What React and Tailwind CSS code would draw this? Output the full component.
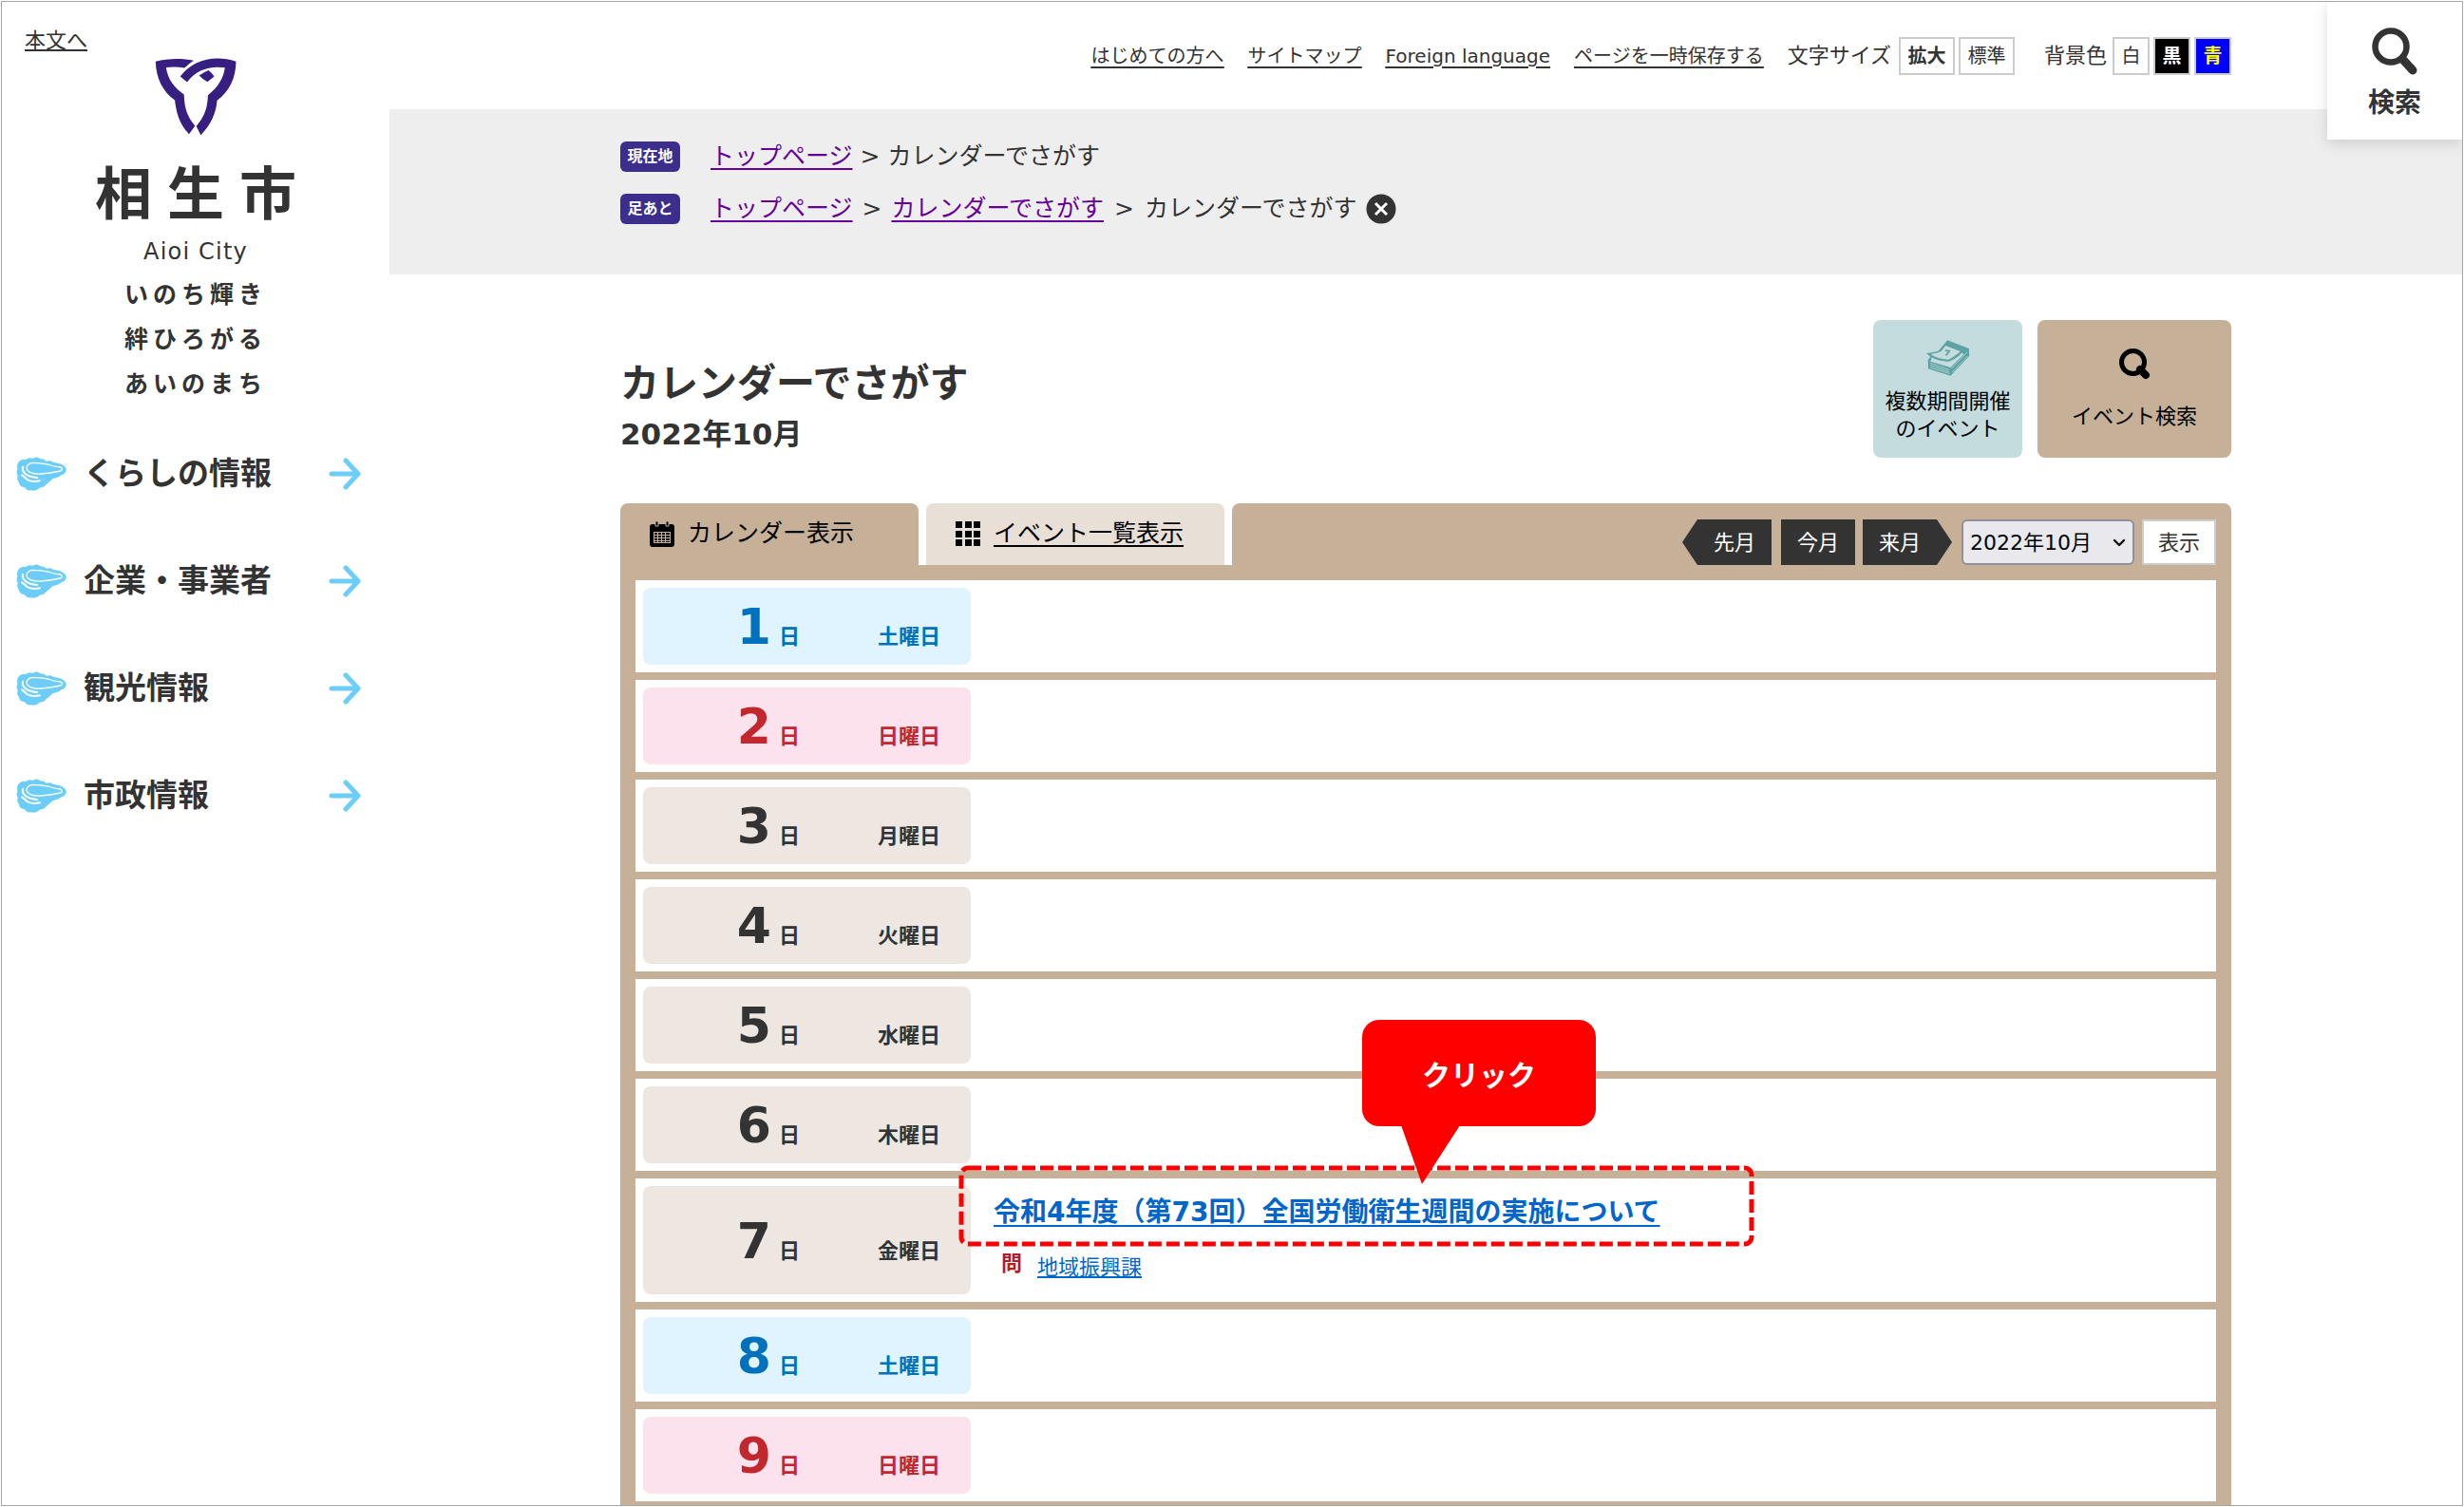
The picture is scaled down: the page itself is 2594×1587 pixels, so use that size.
import React from "react";

const NAV = ["くらしの情報", "企業・事業者", "観光情報", "市政情報"];

const DAYS = [
  { day: 1, week: "土曜日", kind: "sat" },
  { day: 2, week: "日曜日", kind: "sun" },
  { day: 3, week: "月曜日", kind: "week" },
  { day: 4, week: "火曜日", kind: "week" },
  { day: 5, week: "水曜日", kind: "week" },
  { day: 6, week: "木曜日", kind: "week" },
  { day: 7, week: "金曜日", kind: "week", event: true },
  { day: 8, week: "土曜日", kind: "sat" },
  { day: 9, week: "日曜日", kind: "sun" },
];

const KIND = {
  sat: "bg-[#dff4fe] text-[#0071bc]",
  sun: "bg-[#fce2ed] text-[#c1272d]",
  week: "bg-[#eee7e1] text-[#333333]",
};

function CityMark() {
  return (
    <svg viewBox="490 178 258 250" className="h-[83px] w-[86px]" fill="#371f82" aria-hidden="true">
      <path d="M492 192C530 182 575 181 613 189Q596 199 584 213Q555 207 525 211C531 250 552 276 582 297C583 342 593 368 617 396L598 423C565 388 557 350 553 315C515 288 493 245 492 192Z" />
      <path d="M570 240C610 185 680 170 747 192C746 245 726 286 687 316C684 355 668 392 635 426L621 397C648 366 656 340 658 299C692 273 707 243 712 212C664 205 620 219 592 258Z" />
      <path d="M630 237Q644 226 660 220Q672 230 678 240L656 257Q642 250 630 237Z" />
    </svg>
  );
}

function Oyster() {
  return (
    <svg viewBox="52 96 158 108" className="h-9 w-[53px] shrink-0" aria-hidden="true">
      <path
        fill="#6ccdf8"
        d="M60 112Q68 101 82 105Q92 97 104 102Q117 93 128 103Q140 103 147 110Q160 106 168 113L190 118Q208 124 210 138Q206 152 194 154Q184 164 168 165Q156 176 146 184Q140 194 126 194Q114 206 98 202Q84 204 78 192Q62 192 60 176Q52 168 57 156Q50 146 56 136Q52 122 60 112Z"
      />
      <g fill="none" stroke="#fff" strokeLinecap="round" strokeLinejoin="round">
        <path strokeWidth="4" d="M104 115Q88 117 84 130Q84 140 97 146Q112 152 130 150Q156 148 192 141Q202 135 192 129Q170 127 152 120Q130 116 104 115Z" />
        <path strokeWidth="6" d="M73 128Q69 140 80 149Q92 160 118 162" />
        <path strokeWidth="6" d="M70 154Q78 160 86 168Q98 177 126 172" />
      </g>
    </svg>
  );
}

function ArrowRight() {
  return (
    <svg viewBox="0 0 34 34" className="size-[34px] shrink-0" fill="none" stroke="#6ccdf8" strokeWidth="5" strokeLinecap="round" strokeLinejoin="round" aria-hidden="true">
      <path d="M3 17H29M18 3L31 17L18 31" />
    </svg>
  );
}

function SearchMark() {
  return (
    <svg viewBox="0 0 48 50" className="h-[50px] w-12" fill="none" stroke="#333" aria-hidden="true">
      <circle cx="20" cy="20" r="16.5" strokeWidth="6.5" />
      <path d="M33 34L43 45" strokeWidth="9" strokeLinecap="round" />
    </svg>
  );
}

function SearchSmall() {
  return (
    <svg viewBox="0 0 33 33" className="size-[33px]" fill="none" stroke="#000" aria-hidden="true">
      <circle cx="14.5" cy="14.5" r="12" strokeWidth="5" />
      <path d="M22 22L28 28" strokeWidth="8" strokeLinecap="round" />
    </svg>
  );
}

function DailyCalendar() {
  return (
    <svg viewBox="705 113 114 114" preserveAspectRatio="none" className="h-[38px] w-[46px]" aria-hidden="true">
      <path fill="#5ca3a3" d="M760 114L816 140L817 164L768 226L710 204L709 176L716 166L705 156L736 148Z" />
      <path fill="#c5dcde" d="M755 131L794 149Q776 168 762 175Q730 172 716 157Q736 154 744 148Z" />
      <path fill="#c5dcde" d="M719 168Q740 182 764 181Q784 172 797 154L803 158L768 200L716 181Z" />
      <path fill="none" stroke="#c5dcde" strokeWidth="2" d="M715 186L765 208M715 193L765 214M715 200L765 219M771 203L811 152M772 216L813 164" />
      <path fill="none" stroke="#5ca3a3" strokeWidth="5" d="M754 146L765 148L756 162" />
    </svg>
  );
}

function CalendarIcon() {
  return (
    <svg viewBox="0 0 26 27" className="h-[27px] w-[26px]" aria-hidden="true">
      <path d="M3 3H23Q26 3 26 6V24Q26 27 23 27H3Q0 27 0 24V6Q0 3 3 3Z" />
      <path d="M6 0H9V5H6ZM17 0H20V5H17Z" stroke="#c6b097" strokeWidth="1" />
      <path fill="#c6b097" d="M4 11H22V23H4Z" />
      <path d="M5 12h3v2h-3zM9 12h3v2h-3zM13 12h3v2h-3zM17 12h4v2h-4zM5 15h3v2h-3zM9 15h3v2h-3zM13 15h3v2h-3zM17 15h4v2h-4zM5 18h3v2h-3zM9 18h3v2h-3zM13 18h3v2h-3zM17 18h4v2h-4zM5 21h3v1h-3zM9 21h3v1h-3zM13 21h3v1h-3zM17 21h4v1h-4z" />
    </svg>
  );
}

function GridIcon() {
  return (
    <svg viewBox="0 0 26 26" className="size-[26px]" aria-hidden="true">
      <path d="M0 0h7v7h-7zM10 0h7v7h-7zM19 0h7v7h-7zM0 10h7v7h-7zM10 10h7v7h-7zM19 10h7v7h-7zM0 19h7v7h-7zM10 19h7v7h-7zM19 19h7v7h-7z" />
    </svg>
  );
}

function CloseIcon() {
  return (
    <svg viewBox="0 0 32 32" className="size-8" aria-hidden="true">
      <circle cx="16" cy="16" r="15.5" fill="#333" />
      <path d="M10 10L22 22M22 10L10 22" stroke="#fff" strokeWidth="3" />
    </svg>
  );
}

function Sidebar() {
  return (
    <aside className="w-[408px] shrink-0 pt-[27px]">
      <a href="#main" className="ml-6 block w-fit text-[22px] leading-7 underline underline-offset-2">
        本文へ
      </a>
      <div className="mt-[3px] flex flex-col items-center">
        <CityMark />
        <h1 className="mt-[26px] pl-4 text-[60px] leading-[72px] font-bold tracking-[16px]">相生市</h1>
        <p className="mt-2 text-[24px] leading-8 tracking-wider">Aioi City</p>
        <p className="mt-[6px] text-[25px] leading-[47px] font-bold tracking-[5px]">
          いのち輝き
          <br />
          絆ひろがる
          <br />
          あいのまち
        </p>
      </div>
      <nav className="mt-[14px]">
        <ul>
          {NAV.map((label) => (
            <li key={label}>
              <a href="#nav" className="flex h-[113px] items-center pr-[30px] pl-[15px]">
                <Oyster />
                <span className="ml-[18px] flex-1 text-[33px] leading-[48px] font-bold">{label}</span>
                <ArrowRight />
              </a>
            </li>
          ))}
        </ul>
      </nav>
    </aside>
  );
}

function Header() {
  return (
    <header className="flex h-[113px] items-center">
      <div className="mx-auto flex w-full max-w-[1696px] items-center justify-end text-[20px]">
        <nav className="flex gap-[25px] underline underline-offset-4">
          <a href="#first">はじめての方へ</a>
          <a href="#sitemap">サイトマップ</a>
          <a href="#lang">Foreign language</a>
          <a href="#save">ページを一時保存する</a>
        </nav>
        <span className="ml-[25px] text-[22px]">文字サイズ</span>
        <div className="ml-2 flex gap-1">
          <button className="h-10 w-[59px] border-2 border-[#cccccc] bg-white font-bold">拡大</button>
          <button className="h-10 w-[59px] border-2 border-[#cccccc] bg-white">標準</button>
        </div>
        <span className="ml-[31px] text-[22px]">背景色</span>
        <div className="ml-[6px] flex gap-1">
          <button className="h-10 w-[39px] border-2 border-[#cccccc] bg-white">白</button>
          <button className="h-10 w-[39px] border-2 border-[#cccccc] bg-black font-bold text-white">黒</button>
          <button className="h-10 w-[39px] border-2 border-[#cccccc] bg-[#0000ff] font-bold text-[#ffff00]">青</button>
        </div>
      </div>
    </header>
  );
}

function Badge({ children }) {
  return (
    <span className="mr-8 flex h-8 w-[63px] items-center justify-center rounded-md bg-[#3b2e8c] text-[16px] font-bold text-white">
      {children}
    </span>
  );
}

function Breadcrumbs() {
  return (
    <div className="bg-[#eeeeee] pt-[22px] pb-[42px]">
      <div className="mx-auto w-full max-w-[1696px] text-[25px]">
        <div className="flex h-[55px] items-center">
          <Badge>現在地</Badge>
          <a href="#top" className="text-[#660099] underline underline-offset-4">トップページ</a>
          <span className="mx-2">&gt;</span>
          <span>カレンダーでさがす</span>
        </div>
        <div className="flex h-[55px] items-center">
          <Badge>足あと</Badge>
          <a href="#top" className="text-[#660099] underline underline-offset-4">トップページ</a>
          <span className="mx-[10px]">&gt;</span>
          <a href="#cal" className="text-[#660099] underline underline-offset-4">カレンダーでさがす</a>
          <span className="mx-[11px]">&gt;</span>
          <span>カレンダーでさがす</span>
          <button aria-label="削除" className="ml-[10px]">
            <CloseIcon />
          </button>
        </div>
      </div>
    </div>
  );
}

function Tabs() {
  return (
    <div className="flex gap-2 text-[25px] text-black">
      <a href="#calendar" className="flex h-[65px] w-[314px] rounded-t-lg bg-[#c6b097] pt-3 pl-[31px]">
        <span className="flex h-10 items-center gap-[14px]">
          <CalendarIcon />
          <span>カレンダー表示</span>
        </span>
      </a>
      <a href="#list" className="flex h-[65px] w-[314px] rounded-t-lg bg-[#e8dfd7] pt-3 pl-[31px]">
        <span className="flex h-10 items-center gap-[14px]">
          <GridIcon />
          <span className="underline underline-offset-4">イベント一覧表示</span>
        </span>
      </a>
      <form className="flex h-[65px] flex-1 items-end justify-end rounded-t-lg bg-[#c6b097] pr-4 text-[22px]" onSubmit={(e) => e.preventDefault()}>
        <a href="#prev" className="mr-[10px] flex h-12 w-[94px] items-center justify-center bg-[#333333] pl-4 text-white [clip-path:polygon(16px_0,100%_0,100%_100%,16px_100%,0_50%)]">
          先月
        </a>
        <a href="#now" className="mr-2 flex h-12 w-[78px] items-center justify-center bg-[#333333] text-white">今月</a>
        <a href="#next" className="mr-[10px] flex h-12 w-[94px] items-center justify-center bg-[#333333] pr-4 text-white [clip-path:polygon(0_0,calc(100%-16px)_0,100%_50%,calc(100%-16px)_100%,0_100%)]">
          来月
        </a>
        <div className="relative mr-2">
          <select aria-label="表示する年月" className="h-12 w-[182px] appearance-none rounded-md border-2 border-[#8f8f9d] bg-[#e9e9ed] pl-[7px]">
            <option>2022年10月</option>
          </select>
          <svg viewBox="0 0 14 10" className="pointer-events-none absolute top-5 right-[9px] h-[10px] w-[14px]" fill="none" stroke="#111" strokeWidth="2.4" strokeLinecap="round" strokeLinejoin="round" aria-hidden="true">
            <path d="M2 2L7 7L12 2" />
          </svg>
        </div>
        <button className="h-12 w-[78px] border-2 border-[#cccccc] bg-white text-[#333333]">表示</button>
      </form>
    </div>
  );
}

function Callout() {
  return (
    <>
      <svg className="pointer-events-none absolute top-[-14px] left-[-37px] h-[86px] w-[838px]" aria-hidden="true">
        <rect x="3" y="3" width="832" height="80" rx="7" fill="none" stroke="#fa0000" strokeWidth="5" strokeDasharray="14 5" />
      </svg>
      <div className="absolute top-[-167px] left-[388px] flex h-[112px] w-[246px] items-center justify-center rounded-[18px] bg-[#ff0000] pt-1 text-[30px] font-bold text-white">
        クリック
        <svg viewBox="0 0 62 62" className="absolute top-[111px] left-[41px] size-[62px]" fill="#ff0000" aria-hidden="true">
          <path d="M0 0H62L22 62Z" />
        </svg>
      </div>
    </>
  );
}

function EventCell() {
  return (
    <div className="relative pt-[14px] pb-5">
      <a href="#event" className="block w-fit text-[28px] leading-[44px] font-bold text-[#0066cc] underline underline-offset-4">
        令和4年度（第73回）全国労働衛生週間の実施について
      </a>
      <div className="mt-4 flex gap-4 pl-2 text-[22px]">
        <span className="leading-8 font-bold text-[#b81c22]">問</span>
        <a href="#division" className="pt-1 leading-8 text-[#0066cc] underline underline-offset-2">地域振興課</a>
      </div>
      <Callout />
    </div>
  );
}

function DayTable() {
  return (
    <div className="border-x-[16px] border-[#c6b097] bg-[#c6b097] pt-2">
      <table className="w-full border-separate border-spacing-x-0 border-spacing-y-2">
        <tbody>
          {DAYS.map((d) => (
            <tr key={d.day} className="bg-white">
              <th scope="row" className="h-px w-[361px] p-2 text-left">
                <div className={"flex h-full min-h-[81px] items-center rounded-lg pt-3 " + KIND[d.kind]}>
                  <div className="flex flex-1 items-baseline justify-between pr-8 text-[22px] leading-[48px]">
                    <span className="w-[165px] text-right">
                      <span className="mr-2 text-[52px]">{d.day}</span>日
                    </span>
                    <span>{d.week}</span>
                  </div>
                </div>
              </th>
              <td className="py-0 pl-4 align-top">{d.event ? <EventCell /> : null}</td>
            </tr>
          ))}
        </tbody>
      </table>
    </div>
  );
}

export default function App() {
  return (
    <div className="h-screen overflow-hidden bg-white p-px font-['DejaVu_Sans','Noto_Sans_CJK_JP',sans-serif] text-[#333333]" lang="ja">
      <div className="relative flex h-full overflow-hidden border border-[#a6a6a6]">
        <Sidebar />
        <div className="min-w-0 flex-1">
          <Header />
          <Breadcrumbs />
          <main id="main" className="mx-auto w-full max-w-[1696px] pt-12">
            <div className="flex items-end justify-between">
              <div>
                <h2 className="text-[41px] leading-[56px] font-bold">カレンダーでさがす</h2>
                <p className="text-[31px] leading-[50px] font-bold">2022年10月</p>
              </div>
              <div className="flex gap-4 text-[22px] leading-[29px] text-black">
                <a href="#multi" className="flex h-[145px] w-[157px] flex-col items-center rounded-lg bg-[#c5dcde] pt-[21px] text-center">
                  <DailyCalendar />
                  <span className="mt-3 whitespace-nowrap">
                    複数期間開催
                    <br />
                    のイベント
                  </span>
                </a>
                <a href="#search" className="flex h-[145px] w-[204px] flex-col items-center rounded-lg bg-[#c6b097] pt-[30px]">
                  <SearchSmall />
                  <span className="mt-6">イベント検索</span>
                </a>
              </div>
            </div>
            <div className="mt-12">
              <Tabs />
              <DayTable />
            </div>
          </main>
        </div>
        <button className="absolute top-0 right-0 flex h-[145px] w-[142px] flex-col items-center bg-white pt-[27px] shadow-[0_4px_14px_rgba(0,0,0,0.14)]">
          <SearchMark />
          <span className="mt-[10px] text-[28px] leading-10 font-bold">検索</span>
        </button>
      </div>
    </div>
  );
}
